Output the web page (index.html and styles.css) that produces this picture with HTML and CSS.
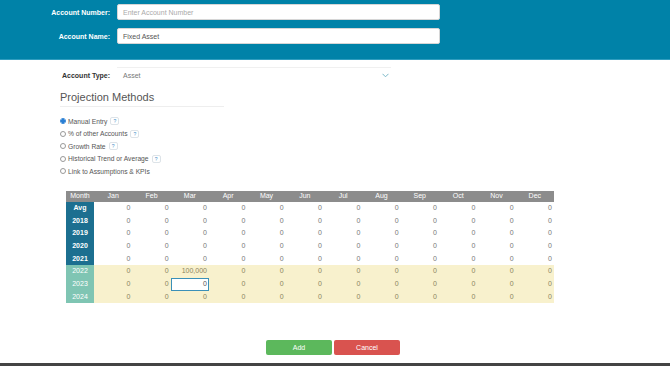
FILE: index.html
```html
<!DOCTYPE html>
<html>
    <head>
        <meta http-equiv="content-type" content="text/html; charset=utf-8" />
        <title>Account</title>
        <link rel="stylesheet" href="styles.css">
    </head>
    <body>
        <div class="topbar">
            <div class="field">
                <label for="accNumber">Account Number:</label>
                <input type="text" id="accNumber" placeholder="Enter Account Number">
            </div>
            <div class="field">
                <label for="accName">Account Name:</label>
                <input type="text" id="accName" value="Fixed Asset">
            </div>
        </div>

        <div class="content">
            <div class="type-row">
                <span class="type-label">Account Type:</span>
                <div class="type-select">
                    <span>Asset</span>
                    <svg width="7" height="5" viewBox="0 0 7 5"><path d="M0.5 0.8 L3.5 3.8 L6.5 0.8" fill="none" stroke="#7ab8c8" stroke-width="1"/></svg>
                </div>
            </div>

            <h2>Projection Methods</h2>

            <ul class="methods">
                <li><span class="radio checked"></span>Manual Entry <span class="help">?</span></li>
                <li><span class="radio"></span>% of other Accounts <span class="help">?</span></li>
                <li><span class="radio"></span>Growth Rate <span class="help">?</span></li>
                <li><span class="radio"></span>Historical Trend or Average <span class="help">?</span></li>
                <li><span class="radio"></span>Link to Assumptions &amp; KPIs</li>
            </ul>

            <table class="grid">
                <thead>
                    <tr><th>Month</th><th>Jan</th><th>Feb</th><th>Mar</th><th>Apr</th><th>May</th><th>Jun</th><th>Jul</th><th>Aug</th><th>Sep</th><th>Oct</th><th>Nov</th><th>Dec</th></tr>
                </thead>
                <tbody id="rows"></tbody>
            </table>

            <div class="actions">
                <button class="btn add">Add</button>
                <button class="btn cancel">Cancel</button>
            </div>
        </div>
        <div class="footer"></div>

        <script>
            var years = ["Avg", "2018", "2019", "2020", "2021", "2022", "2023", "2024"];
            var html = "";
            years.forEach(function (y) {
                var future = y === "2022" || y === "2023" || y === "2024";
                html += '<tr class="' + (future ? "future" : "past") + '"><td class="year">' + y + "</td>";
                for (var m = 0; m < 12; m++) {
                    var val = "0";
                    var cls = "";
                    if (y === "2022" && m === 2) val = "100,000";
                    if (y === "2023" && m === 2) cls = ' class="editing"';
                    html += "<td" + cls + ">" + val + "</td>";
                }
                html += "</tr>";
            });
            document.querySelector("#rows").innerHTML = html;
        </script>
    </body>
</html>
```

FILE: styles.css
```css
* {
    padding: 0;
    margin: 0;
    box-sizing: border-box;
}

body {
    width: 670px;
    height: 366px;
    font-family: "Liberation Sans", Arial, sans-serif;
    font-size: 7px;
    color: #555;
    background: #fff;
    position: relative;
    overflow: hidden;
}

.topbar {
    height: 60px;
    background: #0082a8;
    border-bottom: 1px solid #2f9dbf;
    padding-top: 4px;
    display: flex;
    flex-direction: column;
    gap: 8px;
}

.field {
    display: flex;
    align-items: center;
    gap: 7px;
}

.field label {
    width: 110px;
    text-align: right;
    color: #fff;
    font-weight: 700;
    font-size: 7px;
}

.field input {
    width: 323px;
    height: 16px;
    border: 1px solid #d6d6d6;
    border-radius: 2px;
    padding: 0 5px;
    font-family: "Liberation Sans", Arial, sans-serif;
    font-size: 7px;
    color: #555;
    outline: none;
}

.field input::placeholder {
    color: #aaa;
}

.content {
    padding-left: 60px;
}

.type-row {
    display: flex;
    align-items: center;
    margin-top: 7px;
    height: 16px;
}

.type-label {
    width: 57px;
    padding-left: 2px;
    font-weight: 700;
    color: #333;
}

.type-select {
    width: 274px;
    height: 16px;
    border-top: 1px solid #f0f0f0;
    display: flex;
    align-items: center;
    justify-content: space-between;
    padding: 0 2px 0 6px;
    color: #777;
}

h2 {
    width: 164px;
    margin-top: 8px;
    font-size: 11px;
    font-weight: 400;
    color: #555;
    padding-bottom: 3px;
    border-bottom: 1px solid #eee;
}

.methods {
    list-style: none;
    margin-top: 8px;
    font-size: 6.7px;
}

.methods li {
    height: 12.5px;
    display: flex;
    align-items: center;
    gap: 2px;
}

.radio {
    width: 6px;
    height: 6px;
    border: 1px solid #999;
    border-radius: 50%;
}

.radio.checked {
    border: 1px solid #2a7fd4;
    background: radial-gradient(circle, #2a7fd4 1.6px, #fff 2px);
}

.help {
    display: inline-block;
    width: 9px;
    height: 8px;
    border: 1px solid #dde3e8;
    border-radius: 2px;
    font-size: 5px;
    line-height: 6px;
    text-align: center;
    color: #4a90c8;
    margin-left: 1px;
}

.grid {
    margin-top: 13px;
    margin-left: 6px;
    width: 488px;
    border-collapse: collapse;
    table-layout: fixed;
}

.grid th,
.grid td {
    font-size: 7px;
    font-weight: 400;
    line-height: 8px;
}

.grid th {
    padding: 1.5px 2px;
    background: #8c8c8c;
    color: #fff;
    text-align: center;
    width: 38.3px;
}

.grid th:first-child {
    width: 28px;
}

.grid td {
    padding: 2.5px 2px;
    text-align: right;
    color: #777;
}

/* rows alternate 13/12px so eight rows fill 101px */
.grid tbody tr:nth-child(3n+2) td {
    padding: 2px 2px;
}

.grid td.year {
    text-align: center;
    color: #fff;
    font-weight: 700;
}

.past .year {
    background: #1c6f90;
}

.future td {
    background: #f8f1cd;
    color: #8a8460;
}

.future td.year {
    background: #7fc5b3;
    color: #fff;
    font-weight: 400;
}

.grid td.editing {
    background: #fff;
    outline: 1px solid #3b90b8;
    outline-offset: -1px;
    color: #555;
}

.actions {
    margin-top: 37px;
    padding-left: 206px;
    display: flex;
    gap: 2px;
}

.btn {
    width: 66px;
    height: 15px;
    border: none;
    border-radius: 2px;
    color: #fff;
    font-family: "Liberation Sans", Arial, sans-serif;
    font-size: 7px;
}

.add {
    background: #5cb85c;
}

.cancel {
    background: #d9534f;
}

.footer {
    position: absolute;
    left: 0;
    bottom: 0;
    width: 100%;
    height: 3px;
    background: #444;
}
```
